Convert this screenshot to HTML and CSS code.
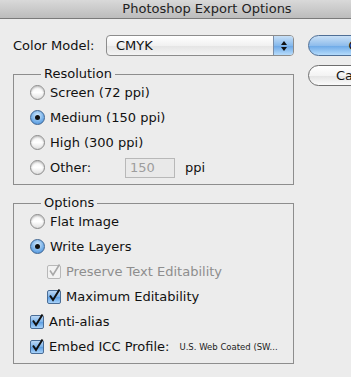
FILE: index.html
```html
<!DOCTYPE html>
<html lang="en">
	<head>
		<meta charset="UTF-8" />
		<meta name="viewport" content="width=device-width, initial-scale=1.0" />
		<title>Photoshop Export Options</title>
		<link rel="stylesheet" href="styles.css">
	</head>
	<body>
		<div class="window">
			<div class="titlebar">Photoshop Export Options</div>
			<div class="content">
				<div class="main">
					<div class="field-row">
						<label class="field-label">Color Model:</label>
						<div class="select">
							<span class="select-value">CMYK</span>
							<span class="stepper">
								<svg width="8" height="12" viewBox="0 0 8 12">
									<path d="M4 1 L7 5 L1 5 Z" fill="#111" />
									<path d="M4 11 L7 7 L1 7 Z" fill="#111" />
								</svg>
							</span>
						</div>
					</div>

					<fieldset class="group">
						<legend>Resolution</legend>
						<div class="rows">
							<div class="row"><span class="radio"></span>Screen (72 ppi)</div>
							<div class="row"><span class="radio checked"></span>Medium (150 ppi)</div>
							<div class="row"><span class="radio"></span>High (300 ppi)</div>
							<div class="row">
								<span class="radio"></span>
								<span class="other-label">Other:</span>
								<span class="num-field">150</span>
								<span class="unit">ppi</span>
							</div>
						</div>
					</fieldset>

					<fieldset class="group">
						<legend>Options</legend>
						<div class="rows">
							<div class="row"><span class="radio"></span>Flat Image</div>
							<div class="row"><span class="radio checked"></span>Write Layers</div>
							<div class="row row-indent disabled">
								<span class="checkbox">
									<svg width="14" height="14" viewBox="0 0 14 14"><path d="M3 6.5 L6 11 L12.5 0.5" /></svg>
								</span>
								Preserve Text Editability
							</div>
							<div class="row row-indent">
								<span class="checkbox checked">
									<svg width="14" height="14" viewBox="0 0 14 14"><path d="M3 6.5 L6 11 L12.5 0.5" /></svg>
								</span>
								Maximum Editability
							</div>
							<div class="row">
								<span class="checkbox checked">
									<svg width="14" height="14" viewBox="0 0 14 14"><path d="M3 6.5 L6 11 L12.5 0.5" /></svg>
								</span>
								Anti-alias
							</div>
							<div class="row">
								<span class="checkbox checked">
									<svg width="14" height="14" viewBox="0 0 14 14"><path d="M3 6.5 L6 11 L12.5 0.5" /></svg>
								</span>
								Embed ICC Profile:
								<span class="profile">U.S. Web Coated (SW...</span>
							</div>
						</div>
					</fieldset>
				</div>

				<div class="buttons">
					<button class="btn btn-default">OK</button>
					<button class="btn">Cancel</button>
				</div>
			</div>
		</div>
	</body>
</html>
```

FILE: styles.css
```css
body {
	margin: 0;
	background: #ececec;
	overflow: hidden;
	font-family: "DejaVu Sans", sans-serif;
	font-size: 13px;
	color: #111;
}
.window {
	width: 414px;
}
.titlebar {
	height: 18px;
	line-height: 18px;
	text-align: center;
	color: #222;
	background: linear-gradient(#d9d9d9, #bcbcbc);
	border-bottom: 1px solid #7a7a7a;
}
.content {
	display: grid;
	grid-template-columns: 281px 100px;
	column-gap: 14px;
	padding: 16px 0 0 13px;
}
.field-row {
	display: flex;
	align-items: center;
	height: 21px;
}
.field-label {
	width: 93px;
}
.select {
	display: flex;
	align-items: center;
	justify-content: space-between;
	box-sizing: border-box;
	width: 188px;
	height: 21px;
	border: 1px solid #8c8c8c;
	border-radius: 4px;
	background: linear-gradient(#ffffff, #f1f1f1 50%, #e4e4e4 51%, #f4f4f4);
	overflow: hidden;
}
.select-value {
	padding-left: 9px;
}
.stepper {
	display: flex;
	align-items: center;
	justify-content: center;
	width: 19px;
	height: 100%;
	border-left: 1px solid #7a8ea8;
	background: linear-gradient(#c8e0f7, #86b9ec 50%, #6aa6e6 51%, #b7dcfb);
}
.group {
	margin: 10px 0 0;
	padding: 0 0 4px 16px;
	border: 1px solid #8d8d8d;
	min-width: 0;
}
.group legend {
	margin-left: 11px;
	padding: 0 3px;
	line-height: 16px;
}
.rows {
	margin-top: -2px;
}
.row {
	display: flex;
	align-items: center;
	gap: 5px;
	height: 25px;
}
.row-indent {
	padding-left: 17px;
}
.disabled {
	color: #8e8e8e;
}
.radio {
	position: relative;
	box-sizing: border-box;
	width: 15px;
	height: 15px;
	flex: none;
	border: 1px solid #8a8a8a;
	border-radius: 50%;
	background: linear-gradient(#f4f4f4, #ffffff 50%, #e0e0e0);
	box-shadow: inset 0 1px 2px rgba(0, 0, 0, 0.25);
}
.radio.checked {
	border-color: #3f6591;
	background: radial-gradient(circle at 50% 35%, #d8ecfc, #7ab3ea 55%, #3f86d6);
	box-shadow: none;
}
.radio.checked::after {
	content: "";
	position: absolute;
	left: 4px;
	top: 4px;
	width: 5px;
	height: 5px;
	border-radius: 50%;
	background: #111;
}
.checkbox {
	box-sizing: border-box;
	width: 14px;
	height: 14px;
	flex: none;
	border: 1px solid #9a9a9a;
	border-radius: 2px;
	background: linear-gradient(#fafafa, #e6e6e6);
}
.checkbox svg {
	display: block;
	margin: -2px 0 0 -1px;
	overflow: visible;
}
.checkbox path {
	fill: none;
	stroke: #111;
	stroke-width: 2;
}
.disabled .checkbox {
	border-color: #b8b8b8;
	background: #f2f2f2;
}
.disabled .checkbox path {
	stroke: #a8a8a8;
	stroke-width: 1.6;
}
.checkbox.checked {
	border-color: #4a6d96;
	background: linear-gradient(#bcd8f5, #7ab2ea 50%, #5b9de2 51%, #a7d2fa);
}
.other-label {
	width: 70px;
}
.num-field {
	box-sizing: border-box;
	width: 50px;
	height: 20px;
	line-height: 18px;
	padding-left: 4px;
	border: 1px solid #b8b8b8;
	background: #e9e9e9;
	color: #9d9d9d;
}
.unit {
	margin-left: 5px;
}
.profile {
	margin-left: 5px;
	font-size: 8.5px;
	color: #222;
}
.buttons {
	display: flex;
	flex-direction: column;
	gap: 9px;
}
.btn {
	box-sizing: border-box;
	width: 100px;
	height: 21px;
	padding: 0;
	border: 1px solid #6e6e6e;
	border-radius: 11px;
	font-family: "DejaVu Sans", sans-serif;
	font-size: 13px;
	color: #111;
	background: linear-gradient(#ffffff, #f3f3f3 50%, #e3e3e3 51%, #fbfbfb);
}
.btn-default {
	border-color: #4f6f96;
	background: linear-gradient(#c9e0f6, #8fbdec 50%, #6ba8e7 51%, #b5dbfb);
}
```
